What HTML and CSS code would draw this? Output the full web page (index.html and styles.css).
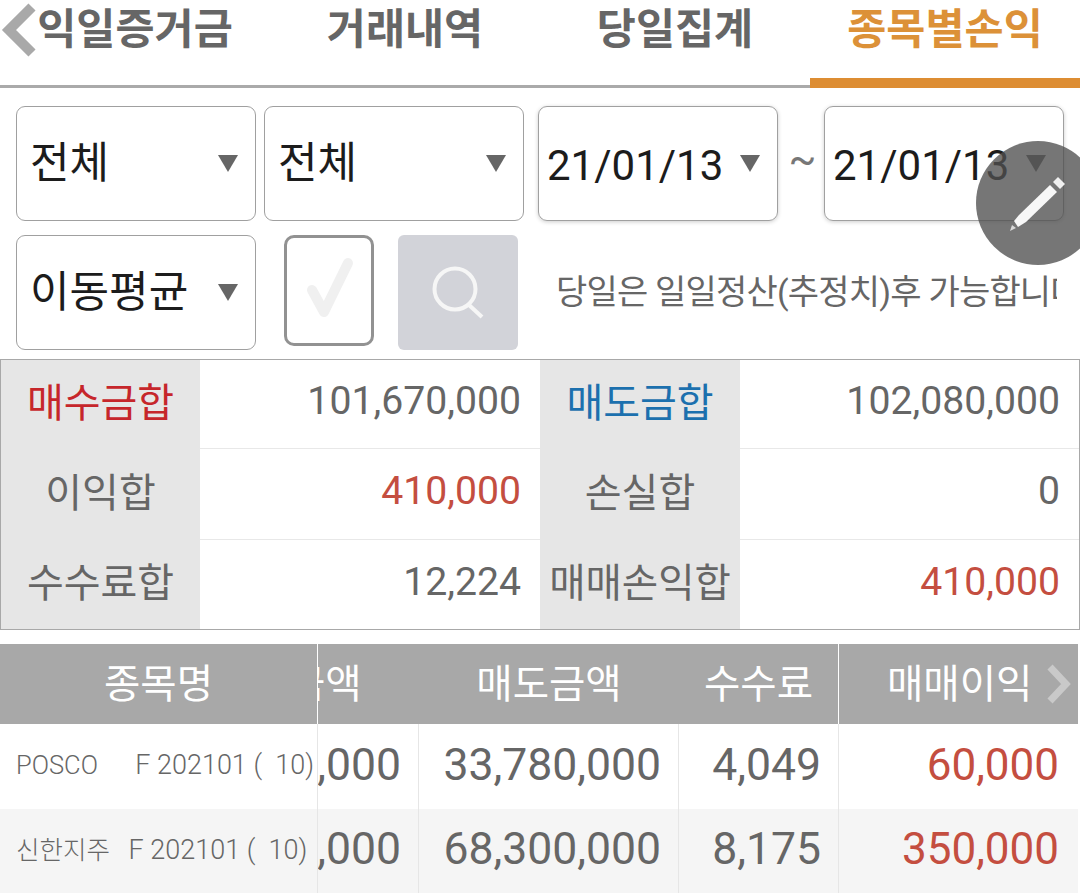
FILE: index.html
```html
<!DOCTYPE html>
<html lang="ko">
<head>
    <meta charset="UTF-8">
    <meta name="viewport" content="width=device-width, initial-scale=1.0">
    <title>종목별손익</title>
    <link rel="stylesheet" href="styles.css">
</head>
<body>
    <div class="screen">
        <svg class="back" width="38" height="56" viewBox="0 0 38 56"><path d="M32 4 L9 27 L32 50" fill="none" stroke="#a9a9a9" stroke-width="10"/></svg>

        <div class="tabs">
            <div class="tab">익일증거금</div>
            <div class="tab">거래내역</div>
            <div class="tab">당일집계</div>
            <div class="tab active">종목별손익</div>
        </div>

        <div class="filters">
            <div class="filter-row">
                <div class="select w240"><span>전체</span><i class="caret"></i></div>
                <div class="select w260"><span>전체</span><i class="caret"></i></div>
                <div class="select date"><span>21/01/13</span><i class="caret"></i></div>
                <div class="tilde">~</div>
                <div class="select date"><span>21/01/13</span><i class="caret"></i></div>
            </div>
            <div class="filter-row second">
                <div class="select w240"><span>이동평균</span><i class="caret"></i></div>
                <div class="checkbox">
                    <svg width="90" height="110" viewBox="0 0 90 110"><path d="M28 55 L40 77 L64 28" fill="none" stroke="#f0f0f0" stroke-width="10" stroke-linecap="round" stroke-linejoin="round"/></svg>
                </div>
                <div class="search">
                    <svg width="120" height="114" viewBox="0 0 120 114"><circle cx="57" cy="54" r="20.5" fill="none" stroke="#f6f6f6" stroke-width="4"/><path d="M71 70 L84 82" fill="none" stroke="#f6f6f6" stroke-width="4"/></svg>
                </div>
                <div class="note">당일은 일일정산(추정치)후 가능합니다</div>
            </div>
        </div>

        <div class="summary">
            <div class="label buy">매수금합</div>
            <div class="value">101,670,000</div>
            <div class="label sell">매도금합</div>
            <div class="value">102,080,000</div>
            <div class="label">이익합</div>
            <div class="value red">410,000</div>
            <div class="label">손실합</div>
            <div class="value">0</div>
            <div class="label">수수료합</div>
            <div class="value last">12,224</div>
            <div class="label tight">매매손익합</div>
            <div class="value red last">410,000</div>
        </div>

        <div class="grid-table">
            <div class="head">
                <div class="head-cell fixed">종목명</div>
                <div class="head-cell clipped"><span>매수금액</span></div>
                <div class="head-cell">매도금액</div>
                <div class="head-cell fee">수수료</div>
                <div class="head-cell profit">매매이익
                    <svg class="next" width="26" height="40" viewBox="0 0 26 40"><path d="M4 3 L20 20 L4 37" fill="none" stroke="#c9c9c9" stroke-width="7"/></svg>
                </div>
            </div>
            <div class="row">
                <div class="cell name">POSCO      <span class="code">F 202101 (  10)</span></div>
                <div class="cell num">33,720,000</div>
                <div class="cell num">33,780,000</div>
                <div class="cell num">4,049</div>
                <div class="cell num red">60,000</div>
            </div>
            <div class="row alt">
                <div class="cell name">신한지주   <span class="code">F 202101 (  10)</span></div>
                <div class="cell num">67,950,000</div>
                <div class="cell num">68,300,000</div>
                <div class="cell num">8,175</div>
                <div class="cell num red">350,000</div>
            </div>
        </div>

        <div class="fab">
            <svg width="124" height="124" viewBox="0 0 124 124">
                <path d="M34 90 L36 84 L40 87 Z" fill="#d8d8d8"/>
                <path d="M38 80 L43 74 L74 44 L81 51 L50 81 L42 86 Z" fill="#f7f7f7"/>
                <path d="M77 41 L82 36 L89 43 L84 48 Z" fill="#f0f0f0"/>
            </svg>
        </div>
    </div>
</body>
</html>
```

FILE: styles.css
```css
* {
    margin: 0;
    padding: 0;
    box-sizing: border-box;
}

body {
    font-family: Roboto, 'Noto Sans CJK KR', sans-serif;
    background: #fff;
    color: #666;
}

.screen {
    position: relative;
    width: 1080px;
    height: 895px;
    overflow: hidden;
}

.back {
    position: absolute;
    left: 0;
    top: 3px;
}

.tabs {
    display: grid;
    grid-template-columns: repeat(4, 1fr);
    height: 88px;
    border-bottom: 3px solid #aaa;
}

.tab {
    font-size: 42.5px;
    font-weight: 700;
    line-height: 59px;
    text-align: center;
    color: #666;
}

.tab.active {
    height: 88px;
    color: #dc9138;
    border-bottom: 10px solid #dd8d33;
}

.filters {
    padding: 18px 16px 0;
}

.filter-row {
    display: flex;
    height: 115px;
}

.filter-row.second {
    margin-top: 14px;
    align-items: flex-start;
}

.select {
    display: flex;
    align-items: center;
    justify-content: space-between;
    height: 115px;
    padding: 0 17px 3px 13px;
    border: 1px solid #a0a0a0;
    border-radius: 9px;
    font-size: 43px;
    color: #1c1c1c;
}

.select span {
    margin-bottom: 7px;
}

.w240 {
    width: 240px;
}

.w260 {
    width: 260px;
    margin-left: 8px;
}

.date {
    width: 240px;
    padding: 0 17px 0 8px;
    font-size: 42px;
    box-shadow: 0 1px 4px rgba(0, 0, 0, 0.2);
}

.date span {
    margin: 3px 0 0;
}

.w260 + .date {
    margin-left: 14px;
}

.caret {
    flex: none;
    width: 0;
    height: 0;
    margin-top: 3px;
    border-left: 10px solid transparent;
    border-right: 10px solid transparent;
    border-top: 17px solid #666;
}

.date .caret {
    margin-top: 0;
}

.tilde {
    width: 46px;
    padding-left: 3px;
    text-align: center;
    font-size: 41px;
    line-height: 106px;
    color: #777;
}

.checkbox {
    width: 90px;
    height: 111px;
    margin-left: 28px;
    border: 3px solid #929292;
    border-radius: 10px;
}

.checkbox svg {
    display: block;
    margin: -3px;
}

.search {
    width: 120px;
    height: 115px;
    margin-left: 24px;
    border-radius: 6px;
    background: #d2d3d9;
}

.search svg {
    display: block;
}

.note {
    width: 501px;
    margin-left: 38px;
    overflow: hidden;
    white-space: nowrap;
    font-size: 34px;
    letter-spacing: -0.8px;
    line-height: 115px;
    color: #666;
}

.summary {
    display: grid;
    grid-template-columns: 199px 340px 200px 339px;
    grid-template-rows: 89px 91px 89px;
    margin-top: 9px;
    border: 1px solid #a8a8a8;
}

.label {
    display: flex;
    align-items: center;
    justify-content: center;
    padding-bottom: 10px;
    background: #e6e6e6;
    font-size: 40px;
    white-space: nowrap;
}

.label.tight {
    font-size: 39.5px;
}

.buy {
    color: #c6262b;
}

.sell {
    color: #1c70ae;
}

.value {
    display: flex;
    align-items: center;
    justify-content: flex-end;
    padding: 0 19px 6px 0;
    border-bottom: 1px solid #e8e8e8;
    font-size: 39.2px;
}

.value.last {
    border-bottom: 0;
}

.red {
    color: #c44e40;
}

.grid-table {
    width: 1078px;
    margin-top: 14px;
}

.head,
.row {
    display: grid;
    grid-template-columns: 318px 101px 260px 160px 239px;
}

.head {
    height: 80px;
    background: #a8a8a8;
}

.head-cell {
    display: flex;
    align-items: center;
    justify-content: center;
    padding-bottom: 8px;
    font-size: 39.5px;
    color: #fff;
    white-space: nowrap;
}

.head-cell.fixed,
.head-cell.fee {
    border-right: 1px solid #fff;
}

.head-cell.clipped {
    justify-content: flex-end;
    overflow: hidden;
}

.head-cell.clipped span {
    flex: none;
    width: 260px;
    text-align: center;
}

.head-cell.profit {
    position: relative;
    justify-content: flex-start;
    padding-left: 48px;
}

.next {
    position: absolute;
    left: 207px;
    top: 20px;
}

.row {
    height: 85px;
}

.row.alt {
    height: 84px;
    background: #f5f5f5;
}

.cell {
    display: flex;
    align-items: center;
    border-right: 1px solid #e6e6e6;
    white-space: nowrap;
    overflow: hidden;
}

.cell:last-child {
    border-right: 0;
}

.name {
    display: block;
    padding-left: 16px;
    font-size: 25.5px;
    line-height: 83px;
    font-weight: 300;
    white-space: pre;
}

.code {
    font-size: 27px;
}

.num {
    justify-content: flex-end;
    padding: 0 17px 4px 0;
    font-size: 44.5px;
}

.num:last-child {
    padding-right: 19px;
    font-size: 44px;
}

.fab {
    position: absolute;
    left: 976px;
    top: 141px;
    width: 124px;
    height: 124px;
    border-radius: 50%;
    background: rgba(80, 80, 80, 0.78);
}

.fab svg {
    display: block;
}
```
